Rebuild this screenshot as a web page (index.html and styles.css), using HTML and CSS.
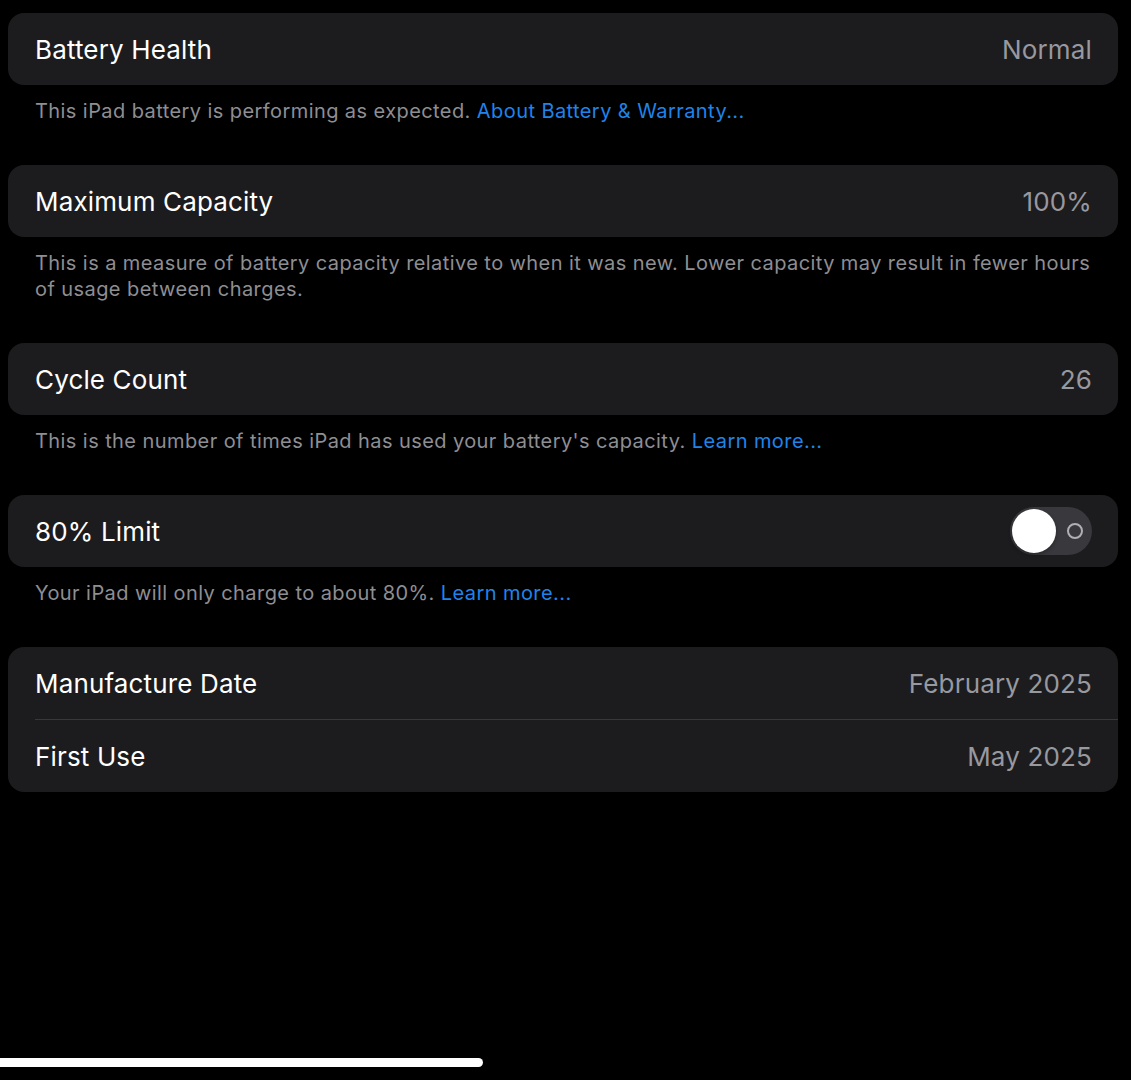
FILE: index.html
```html
<!DOCTYPE html>
<html>
<head>
<meta charset="utf-8">
<link rel="stylesheet" href="styles.css">
</head>
<body>
<main class="page">
  <section class="group">
    <div class="card">
      <div class="row"><span class="label">Battery Health</span><span class="value">Normal</span></div>
    </div>
    <p class="footer">This iPad battery is performing as expected. <span class="link">About Battery &amp; Warranty...</span></p>
  </section>
  <section class="group">
    <div class="card">
      <div class="row"><span class="label">Maximum Capacity</span><span class="value">100%</span></div>
    </div>
    <p class="footer">This is a measure of battery capacity relative to when it was new. Lower capacity may result in fewer hours of usage between charges.</p>
  </section>
  <section class="group">
    <div class="card">
      <div class="row"><span class="label">Cycle Count</span><span class="value">26</span></div>
    </div>
    <p class="footer">This is the number of times iPad has used your battery's capacity. <span class="link">Learn more...</span></p>
  </section>
  <section class="group">
    <div class="card">
      <div class="row"><span class="label">80% Limit</span>
        <span class="toggle"><span class="knob"></span><span class="off-mark"></span></span>
      </div>
    </div>
    <p class="footer">Your iPad will only charge to about 80%. <span class="link">Learn more...</span></p>
  </section>
  <section class="group">
    <div class="card">
      <div class="row"><span class="label">Manufacture Date</span><span class="value">February 2025</span></div>
      <div class="sep"></div>
      <div class="row"><span class="label">First Use</span><span class="value">May 2025</span></div>
    </div>
  </section>
</main>
<div class="home-indicator"></div>
</body>
</html>
```
FILE: styles.css
```css
html, body {
  margin: 0;
  padding: 0;
  background: #000;
}
body {
  font-family: Inter, "Open Sans", "Liberation Sans", sans-serif;
  color: #fff;
  width: 1131px;
  height: 1080px;
  overflow: hidden;
  position: relative;
}
.page {
  padding: 13px 13px 0 8px;
  display: flex;
  flex-direction: column;
}
.card {
  background: #1c1c1e;
  border-radius: 16px;
  overflow: hidden;
}
.row {
  height: 72px;
  display: flex;
  align-items: center;
  justify-content: space-between;
  padding: 0 26px 0 27px;
}
.label {
  font-size: 26px;
  letter-spacing: 0.15px;
  color: #fff;
}
.value {
  font-size: 26px;
  letter-spacing: 0.15px;
  color: #98989f;
}
.sep {
  height: 1px;
  background: #38383a;
  margin-left: 27px;
}
.footer {
  margin: 0;
  padding: 13px 26px 41px 27px;
  font-size: 20px;
  line-height: 26px;
  letter-spacing: 0.42px;
  color: #8e8e93;
}
.link {
  color: #1f84ea;
}
.toggle {
  width: 82px;
  height: 48px;
  border-radius: 24px;
  background: #39393d;
  display: flex;
  align-items: center;
  padding: 2px;
  box-sizing: border-box;
}
.knob {
  width: 44px;
  height: 44px;
  border-radius: 50%;
  background: #fff;
  box-shadow: 0 2px 4px rgba(0,0,0,0.3);
}
.off-mark {
  width: 12px;
  height: 12px;
  border: 2px solid #b0b0b4;
  border-radius: 50%;
  margin-left: 11px;
}
.home-indicator {
  position: absolute;
  left: -20px;
  top: 1058px;
  width: 503px;
  height: 9px;
  border-radius: 5px;
  background: #fff;
}
```
